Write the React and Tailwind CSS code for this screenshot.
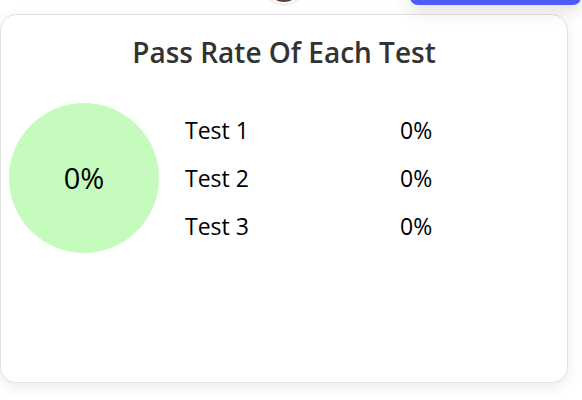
import React from 'react';

const tests = [
  { name: 'Test 1', rate: 0 },
  { name: 'Test 2', rate: 0 },
  { name: 'Test 3', rate: 0 },
];

export default function App() {
  return (
    <div className="h-[400px] w-[582px] overflow-hidden bg-white" style={{ fontFamily: '"Open Sans", "Noto Sans", sans-serif' }}>
      {/* header bits peeking in from above */}
      <div className="relative h-0">
        <div className="absolute left-[264px] top-[-36px] h-10 w-10 rounded-full border-2 border-white bg-[#5a4033] shadow"></div>
        <div className="absolute left-[410px] top-[-30px] h-[35px] w-[171px] rounded-lg bg-[#4f5cf6] shadow-[0_6px_18px_rgba(0,0,0,0.12)]"></div>
      </div>

      <div className="pt-[14px]">
        <div className="flex h-[369px] w-[568px] flex-col rounded-2xl border border-[#e2e2e2] bg-white shadow-[0_4px_14px_rgba(0,0,0,0.08)]">
          <h2 className="pt-[19px] text-center text-[28px] font-semibold leading-[36px] text-[#333]">
            Pass Rate Of Each Test
          </h2>

          <div className="mt-[33px] flex items-center pl-[8px]">
            <div className="flex h-[150px] w-[150px] items-center justify-center rounded-full bg-[#c5fbbc]">
              <span className="text-[29px] text-black">0%</span>
            </div>

            <div className="ml-[26px] flex flex-col">
              {tests.map((t) => (
                <div key={t.name} className="flex h-[48px] items-center text-[23px] text-black">
                  <span className="w-[215px]">{t.name}</span>
                  <span>{t.rate}%</span>
                </div>
              ))}
            </div>
          </div>
        </div>
      </div>
    </div>
  );
}
